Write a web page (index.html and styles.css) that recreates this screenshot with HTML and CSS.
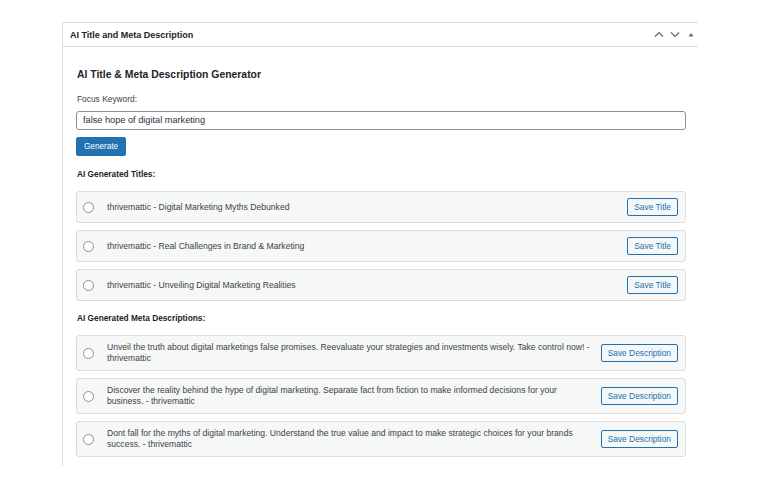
FILE: index.html
```html
<!DOCTYPE html>
<html>
<head>
<meta charset="utf-8">
<link rel="stylesheet" href="styles.css">
</head>
<body>
<div class="panel">
  <div class="panel-head">
    <span class="panel-title">AI Title and Meta Description</span>
    <div class="head-icons">
      <svg width="10" height="7" viewBox="0 0 10 7"><path d="M1 5.5 L5 1.5 L9 5.5" fill="none" stroke="#646970" stroke-width="1.2"/></svg>
      <svg width="10" height="7" viewBox="0 0 10 7"><path d="M1 1.5 L5 5.5 L9 1.5" fill="none" stroke="#646970" stroke-width="1.2"/></svg>
      <svg width="6" height="5" viewBox="0 0 6 5"><path d="M0.5 4.5 L3 1 L5.5 4.5 Z" fill="#646970"/></svg>
    </div>
  </div>
  <div class="panel-body">
    <h2 class="gen-title">AI Title &amp; Meta Description Generator</h2>
    <label class="kw-label">Focus Keyword:</label>
    <div class="kw-input">false hope of digital marketing</div>
    <div><button class="btn-primary">Generate</button></div>

    <h3 class="sec-title">AI Generated Titles:</h3>
    <div class="list">
      <div class="row">
        <span class="radio"></span>
        <span class="row-text">thrivemattic - Digital Marketing Myths Debunked</span>
        <button class="btn-sec">Save Title</button>
      </div>
      <div class="row">
        <span class="radio"></span>
        <span class="row-text">thrivemattic - Real Challenges in Brand &amp; Marketing</span>
        <button class="btn-sec">Save Title</button>
      </div>
      <div class="row">
        <span class="radio"></span>
        <span class="row-text">thrivemattic - Unveiling Digital Marketing Realities</span>
        <button class="btn-sec">Save Title</button>
      </div>
    </div>

    <h3 class="sec-title sec-desc">AI Generated Meta Descriptions:</h3>
    <div class="list">
      <div class="row row-desc">
        <span class="radio"></span>
        <span class="row-text">Unveil the truth about digital marketings false promises. Reevaluate your strategies and investments wisely. Take control now! -<br>thrivemattic</span>
        <button class="btn-sec">Save Description</button>
      </div>
      <div class="row row-desc">
        <span class="radio"></span>
        <span class="row-text">Discover the reality behind the hype of digital marketing. Separate fact from fiction to make informed decisions for your<br>business. - thrivemattic</span>
        <button class="btn-sec">Save Description</button>
      </div>
      <div class="row row-desc">
        <span class="radio"></span>
        <span class="row-text">Dont fall for the myths of digital marketing. Understand the true value and impact to make strategic choices for your brands<br>success. - thrivemattic</span>
        <button class="btn-sec">Save Description</button>
      </div>
    </div>
  </div>
</div>
</body>
</html>
```

FILE: styles.css
```css
html, body {
  margin: 0;
  padding: 0;
  background: #ffffff;
}
body {
  padding: 22px 0 0 62px;
  font-family: "Liberation Sans", Arial, sans-serif;
  color: #3c434a;
}
.panel {
  width: 636px;
  box-sizing: border-box;
  border-top: 1px solid #dcdcde;
  border-left: 1px solid #dcdcde;
  height: 444px;
}
.panel-head {
  height: 23px;
  border-bottom: 1px solid #dcdcde;
  display: flex;
  align-items: center;
  justify-content: space-between;
  padding: 0 4px 0 7px;
}
.panel-title {
  font-size: 9px;
  font-weight: bold;
  color: #1d2327;
}
.head-icons {
  display: flex;
  align-items: center;
  gap: 6px;
}
.head-icons svg:last-child {
  margin-left: 2px;
}
.panel-body {
  padding: 0 12px 0 13px;
  display: flex;
  flex-direction: column;
}
.gen-title {
  margin: 21px 0 0 1px;
  font-size: 10.4px;
  font-weight: bold;
  color: #1d2327;
  line-height: 14px;
}
.kw-label {
  margin-top: 12px;
  margin-left: 1px;
  font-size: 8.4px;
  line-height: 10px;
  color: #3c434a;
}
.kw-input {
  margin-top: 7px;
  height: 19px;
  box-sizing: border-box;
  border: 1px solid #8c8f94;
  border-radius: 3px;
  padding: 0 6px;
  font-size: 9.2px;
  line-height: 17px;
  color: #2c3338;
}
.btn-primary {
  margin-top: 7px;
  height: 19px;
  padding: 0 7px;
  background: #2271b1;
  border: 1px solid #2271b1;
  border-radius: 2px;
  color: #fff;
  font-family: "Liberation Sans", Arial, sans-serif;
  font-size: 8.2px;
  cursor: pointer;
}
.sec-title {
  margin: 13px 0 0 1px;
  font-size: 8.3px;
  font-weight: bold;
  line-height: 10px;
  color: #1d2327;
}
.sec-desc {
  margin-top: 12px;
}
.list {
  margin-top: 12px;
  display: flex;
  flex-direction: column;
  gap: 7px;
}
.row {
  display: flex;
  align-items: center;
  height: 32px;
  box-sizing: border-box;
  background: #f6f7f7;
  border: 1px solid #dcdcde;
  border-radius: 3px;
  padding: 0 7px 0 6px;
}
.row-desc {
  height: 36px;
}
.radio {
  flex: none;
  width: 11px;
  height: 11px;
  box-sizing: border-box;
  border: 1px solid #8c8f94;
  border-radius: 50%;
  background: #fff;
  margin: 0 13px 0 0;
}
.row-text {
  flex: 1;
  font-size: 8.6px;
  line-height: 11px;
  color: #3c434a;
  padding-right: 4px;
}
.btn-sec {
  flex: none;
  height: 18px;
  padding: 0 6px;
  background: #f6f7f7;
  border: 1px solid #2271b1;
  border-radius: 2px;
  color: #2271b1;
  font-family: "Liberation Sans", Arial, sans-serif;
  font-size: 8.4px;
  cursor: pointer;
}
```
